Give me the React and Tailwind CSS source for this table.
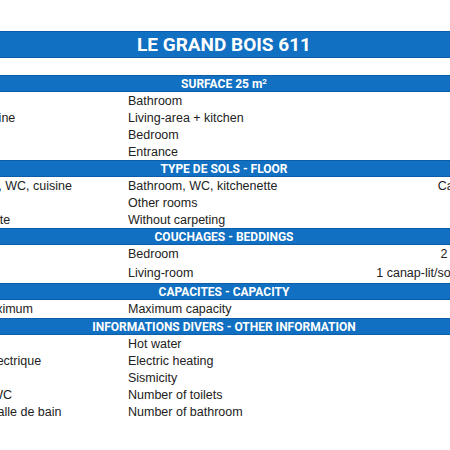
import React from "react";

const sections = [
  {
    title: (
      <>
        SURFACE 25 m<sup className="text-[8px]">2</sup>
      </>
    ),
    rowH: "h-[17px]",
    rows: [
      ["Salle de bain", "Bathroom", ""],
      ["Séjour + cuisine", "Living-area + kitchen", ""],
      ["Chambre", "Bedroom", ""],
      ["Entrée", "Entrance", ""],
    ],
  },
  {
    title: "TYPE DE SOLS - FLOOR",
    rowH: "h-[17px]",
    rows: [
      ["Salle de bain, WC, cuisine", "Bathroom, WC, kitchenette", "Carrelage / Tiling"],
      ["Autre pièce", "Other rooms", ""],
      ["Sans moquette", "Without carpeting", ""],
    ],
  },
  {
    title: "COUCHAGES - BEDDINGS",
    rowH: "h-[19px]",
    rows: [
      ["Chambre", "Bedroom", "2 lits / twin beds"],
      ["Séjour", "Living-room", "1 canap-lit/sofa bed (2 pers. / 2 people)"],
    ],
  },
  {
    title: "CAPACITES - CAPACITY",
    rowH: "h-[18px]",
    rows: [["Capacité maximum", "Maximum capacity", ""]],
  },
  {
    title: "INFORMATIONS DIVERS - OTHER INFORMATION",
    rowH: "h-[17px]",
    rows: [
      ["Eau chaude", "Hot water", ""],
      ["Chauffage électrique", "Electric heating", ""],
      ["Sismicité", "Sismicity", ""],
      ["Nombre de WC", "Number of toilets", ""],
      ["Nombre de salle de bain", "Number of bathroom", ""],
    ],
  },
];

const narrow = { fontFamily: '"Liberation Sans Narrow", Roboto, "Liberation Sans", sans-serif' };

const Bar = ({ children, h, text }) => (
  <div className={`bg-[#1170c1] border-y border-[#0c5ea8] ${h} flex items-center`}>
    <div className={`w-[608px] text-center text-white font-bold ${text}`} style={narrow}>
      {children}
    </div>
  </div>
);

export default function App() {
  return (
    <div className="w-[450px] h-[450px] overflow-hidden bg-white">
      <div
        className="w-[770px] -ml-[80px] pt-[31px] text-[12.5px] text-[#222]"
        style={{ fontFamily: '"Liberation Sans", Arial, sans-serif' }}
      >
        <Bar h="h-[27px]" text="text-[19px] leading-none">
          LE GRAND BOIS 611
        </Bar>
        <div className="h-[17px]" />
        {sections.map((s, i) => (
          <div key={i}>
            <Bar h="h-[17px]" text="text-[12px] leading-none">
              {s.title}
            </Bar>
            {s.rows.map((r, j) => (
              <div key={j} className={`grid grid-cols-[208px_152px_410px] items-center ${s.rowH}`}>
                <div className="pl-[6px] whitespace-nowrap">{r[0]}</div>
                <div className="whitespace-nowrap">{r[1]}</div>
                <div className="text-center whitespace-nowrap">{r[2]}</div>
              </div>
            ))}
          </div>
        ))}
      </div>
    </div>
  );
}
